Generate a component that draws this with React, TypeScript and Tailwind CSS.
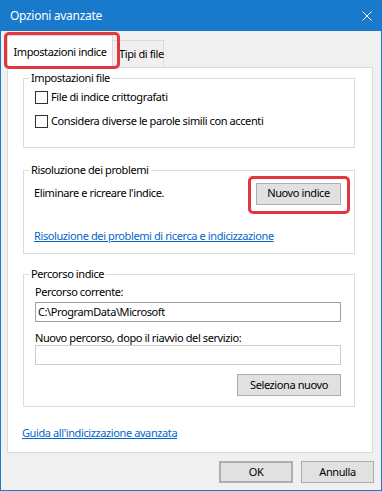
import { ReactNode } from 'react'

const font = "font-['Noto_Sans',sans-serif]"

function Checkbox({ label }: { label: string }) {
  return (
    <label className="flex items-center h-[24px] gap-[3px]">
      <span className="w-[13px] h-[13px] border border-[#333333] bg-white" />
      <span>{label}</span>
    </label>
  )
}

function Group({ title, children, className, inner }: { title: string; children: ReactNode; className?: string; inner?: string }) {
  return (
    <fieldset className={'w-[332px] border border-[#dcdcdc] ' + (className ?? '')}>
      <legend className="ml-[5px] px-[2px] leading-[14px]">{title}</legend>
      <div className={inner}>{children}</div>
    </fieldset>
  )
}

function Button({ children, className }: { children: ReactNode; className?: string }) {
  return (
    <button className={'h-[22px] bg-[#e1e1e1] border border-[#adadad] flex items-center justify-center ' + (className ?? '')}>
      {children}
    </button>
  )
}

export default function App() {
  return (
    <div className={`w-[382px] h-[491px] flex flex-col bg-[#f0f0f0] border-x border-b border-[#1979ca] text-[11px] tracking-[-0.4px] text-black whitespace-nowrap ${font}`}>
      {/* title bar */}
      <div className="h-[31px] shrink-0 bg-[#1979ca] flex items-center justify-between pl-[9px] pr-[9px] text-white text-[12px] tracking-[-0.3px]">
        <span>Opzioni avanzate</span>
        <svg width="10" height="10" viewBox="0 0 10 10">
          <path d="M0.5 0.5L9.5 9.5M9.5 0.5L0.5 9.5" stroke="white" strokeWidth="1" />
        </svg>
      </div>

      <div className="flex flex-col pl-[6px] pt-[4px]">
        {/* tabs */}
        <div className="flex items-end h-[32px]">
          <div className="relative z-10 h-[33px] -mb-px w-[106px] bg-white border-x border-t border-[#d9d9d9] flex items-center justify-center">
            Impostazioni indice
            <span className="absolute -left-[4px] -right-[8px] -top-[4px] -bottom-px border-[3px] border-[#e2373e] rounded-[5px]" />
          </div>
          <div className="h-[27px] w-[51px] border-t border-r border-[#d9d9d9] flex items-center pl-[6px]">
            Tipi di file
          </div>
        </div>

        {/* panel */}
        <div className="w-[366px] h-[386px] bg-white border border-[#d9d9d9] px-[15px] pt-[3px] flex flex-col">
          <Group title="Impostazioni file" inner="pl-[11px] pb-[14px]">
            <Checkbox label="File di indice crittografati" />
            <Checkbox label="Considera diverse le parole simili con accenti" />
          </Group>

          <Group title="Risoluzione dei problemi" className="mt-[15px]" inner="pl-[10px] pr-[13px] pb-[9px]">
            <div className="mt-[5px] flex items-center h-[23px]">
              <span>Eliminare e ricreare l'indice.</span>
              <span className="relative ml-auto">
                <Button className="w-[85px]">Nuovo indice</Button>
                <span className="absolute -left-[8px] -right-[9px] -top-[7px] -bottom-[9px] border-[3px] border-[#e2373e] rounded-[5px]" />
              </span>
            </div>
            <a href="#" className="block mt-[23px] leading-[16px] text-[#0066cc] underline">
              Risoluzione dei problemi di ricerca e indicizzazione
            </a>
          </Group>

          <Group title="Percorso indice" className="mt-[13px]" inner="pl-[11px] pb-[10px]">
            <div className="mt-[3px] leading-[16px]">Percorso corrente:</div>
            <div className="mt-[2px] w-[306px] h-[20px] border border-[#a0a0a0] bg-white flex items-center pl-[2px]">
              C:\ProgramData\Microsoft
            </div>
            <div className="mt-[9px] leading-[14px]">Nuovo percorso, dopo il riavvio del servizio:</div>
            <div className="w-[306px] h-[20px] border border-[#cccccc] bg-white" />
            <div className="w-[306px] flex justify-end mt-[9px]">
              <Button className="w-[104px]">Seleziona nuovo</Button>
            </div>
          </Group>

          <a href="#" className="-ml-px mt-[18px] leading-[16px] text-[#0066cc] underline self-start">
            Guida all'indicizzazione avanzata
          </a>
        </div>

        {/* dialog buttons */}
        <div className="flex justify-end gap-[8px] pr-[7px] mt-[8px]">
          <Button className="w-[74px] border-2 border-[#0078d7]">OK</Button>
          <Button className="w-[73px]">Annulla</Button>
        </div>
      </div>
    </div>
  )
}
